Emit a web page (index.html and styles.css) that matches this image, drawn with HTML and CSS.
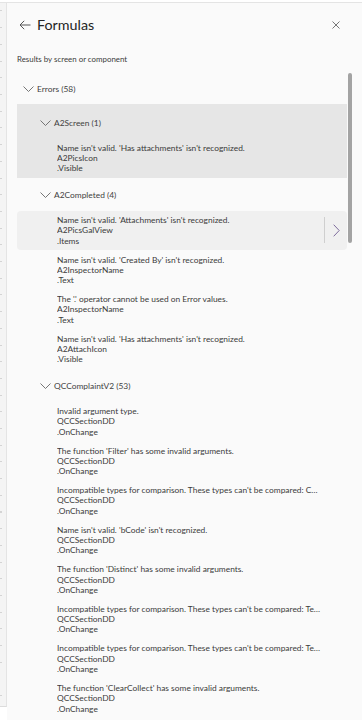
FILE: index.html
```html
<!DOCTYPE html>
<html lang="en">
<head>
<meta charset="utf-8">
<title>Formulas</title>
<link rel="stylesheet" href="styles.css">
</head>
<body>
<div class="app">
  <div class="rail"></div>
  <section class="panel">
    <header class="head">
      <svg class="back" width="12" height="10" viewBox="0 0 12 10" aria-hidden="true"><path d="M11.5 5H1M5.2 0.8L1 5l4.2 4.2" fill="none" stroke="#555" stroke-width="1"/></svg>
      <h1 class="title">Formulas</h1>
      <svg class="close" width="8" height="8" viewBox="0 0 8 8" aria-hidden="true"><path d="M0.5 0.5l7 7M7.5 0.5l-7 7" fill="none" stroke="#666" stroke-width="0.9"/></svg>
    </header>
    <p class="subtitle">Results by screen or component</p>

    <div class="results">
      <div class="cat-head">
        <svg class="chev" width="11" height="6" viewBox="0 0 11 6" aria-hidden="true"><path d="M0.5 0.5l5 5 5-5" fill="none" stroke="#666" stroke-width="0.9"/></svg>
        <span>Errors (58)</span>
      </div>

      <div class="group selected">
        <div class="group-head">
          <svg class="chev" width="11" height="6" viewBox="0 0 11 6" aria-hidden="true"><path d="M0.5 0.5l5 5 5-5" fill="none" stroke="#666" stroke-width="0.9"/></svg>
          <span>A2Screen (1)</span>
        </div>
        <div class="item">
          <div class="item-text">
            <div class="line">Name isn't valid. 'Has attachments' isn't recognized.</div>
            <div class="line">A2PicsIcon</div>
            <div class="line">.Visible</div>
          </div>
        </div>
      </div>

      <div class="group">
        <div class="group-head">
          <svg class="chev" width="11" height="6" viewBox="0 0 11 6" aria-hidden="true"><path d="M0.5 0.5l5 5 5-5" fill="none" stroke="#666" stroke-width="0.9"/></svg>
          <span>A2Completed (4)</span>
        </div>
        <div class="item hover">
          <div class="item-text">
            <div class="line">Name isn't valid. 'Attachments' isn't recognized.</div>
            <div class="line">A2PicsGalView</div>
            <div class="line">.Items</div>
          </div>
          <div class="go">
            <svg width="7" height="13" viewBox="0 0 7 13" aria-hidden="true"><path d="M0.7 0.7l5.5 5.8-5.5 5.8" fill="none" stroke="#7d6b9c" stroke-width="1"/></svg>
          </div>
        </div>
        <div class="item">
          <div class="item-text">
            <div class="line">Name isn't valid. 'Created By' isn't recognized.</div>
            <div class="line">A2InspectorName</div>
            <div class="line">.Text</div>
          </div>
        </div>
        <div class="item">
          <div class="item-text">
            <div class="line">The '.' operator cannot be used on Error values.</div>
            <div class="line">A2InspectorName</div>
            <div class="line">.Text</div>
          </div>
        </div>
        <div class="item">
          <div class="item-text">
            <div class="line">Name isn't valid. 'Has attachments' isn't recognized.</div>
            <div class="line">A2AttachIcon</div>
            <div class="line">.Visible</div>
          </div>
        </div>
      </div>

      <div class="group">
        <div class="group-head">
          <svg class="chev" width="11" height="6" viewBox="0 0 11 6" aria-hidden="true"><path d="M0.5 0.5l5 5 5-5" fill="none" stroke="#666" stroke-width="0.9"/></svg>
          <span>QCComplaintV2 (53)</span>
        </div>
        <div class="item">
          <div class="item-text">
            <div class="line">Invalid argument type.</div>
            <div class="line">QCCSectionDD</div>
            <div class="line">.OnChange</div>
          </div>
        </div>
        <div class="item">
          <div class="item-text">
            <div class="line">The function 'Filter' has some invalid arguments.</div>
            <div class="line">QCCSectionDD</div>
            <div class="line">.OnChange</div>
          </div>
        </div>
        <div class="item">
          <div class="item-text">
            <div class="line">Incompatible types for comparison. These types can't be compared: Control, Text.</div>
            <div class="line">QCCSectionDD</div>
            <div class="line">.OnChange</div>
          </div>
        </div>
        <div class="item">
          <div class="item-text">
            <div class="line">Name isn't valid. 'bCode' isn't recognized.</div>
            <div class="line">QCCSectionDD</div>
            <div class="line">.OnChange</div>
          </div>
        </div>
        <div class="item">
          <div class="item-text">
            <div class="line">The function 'Distinct' has some invalid arguments.</div>
            <div class="line">QCCSectionDD</div>
            <div class="line">.OnChange</div>
          </div>
        </div>
        <div class="item">
          <div class="item-text">
            <div class="line">Incompatible types for comparison. These types can't be compared: Text, Number.</div>
            <div class="line">QCCSectionDD</div>
            <div class="line">.OnChange</div>
          </div>
        </div>
        <div class="item">
          <div class="item-text">
            <div class="line">Incompatible types for comparison. These types can't be compared: Text, Record.</div>
            <div class="line">QCCSectionDD</div>
            <div class="line">.OnChange</div>
          </div>
        </div>
        <div class="item">
          <div class="item-text">
            <div class="line">The function 'ClearCollect' has some invalid arguments.</div>
            <div class="line">QCCSectionDD</div>
            <div class="line">.OnChange</div>
          </div>
        </div>
        <div class="item">
          <div class="item-text">
            <div class="line">The function 'Patch' has some invalid arguments.</div>
            <div class="line">QCCSectionDD</div>
            <div class="line">.OnChange</div>
          </div>
        </div>
      </div>
    </div>

    <div class="scrollbar"></div>
  </section>
</div>
</body>
</html>
```

FILE: styles.css
```css
* { box-sizing: border-box; }

html, body {
  margin: 0;
  padding: 0;
  height: 100%;
  background: #ffffff;
}

body {
  font-family: Lato, "Open Sans", "Liberation Sans", sans-serif;
  color: #3a3a3a;
  overflow: hidden;
}

.app {
  display: flex;
  height: 720px;
}

.rail {
  flex: 0 0 7px;
  margin-top: 2px;
  height: 705px;
  background-color: #f4f4f4;
  background-image: repeating-linear-gradient(to bottom, transparent 0 7.5px, #d4d4d4 7.5px 8.5px, transparent 8.5px 16.7px);
  background-size: 2px 100%;
  background-repeat: no-repeat;
  border-right: 1px solid #e4e4e4;
  border-top: 1px solid #e4e4e4;
  border-bottom: 1px solid #dcdcdc;
}

.panel {
  position: relative;
  flex: 1 1 auto;
  margin-top: 2px;
  border-top: 1px solid #e4e4e4;
  background: #fafafa;
  overflow: hidden;
}

.head {
  display: flex;
  align-items: center;
  height: 43px;
  padding: 0 22px 0 12px;
}

.back {
  display: block;
  margin-right: 6px;
}

.title {
  flex: 1 1 auto;
  margin: 0;
  font-size: 14.3px;
  font-weight: 400;
  color: #242424;
  line-height: 20px;
}

.close {
  display: block;
}

.subtitle {
  margin: 8px 0 0 10px;
  font-size: 7.9px;
  line-height: 10px;
  color: #3a3a3a;
}

.results {
  margin: 0 15px 0 10px;
}

.cat-head,
.group-head {
  display: flex;
  align-items: center;
  font-size: 8.4px;
  line-height: 10.3px;
  color: #3f3f3f;
}

.cat-head {
  padding: 19.85px 0 10.35px 6px;
}

.group-head {
  padding: 12px 0 10.35px 23px;
}

.chev {
  display: block;
  margin-right: 3px;
}

.group.selected {
  background: #e6e6e6;
}

.group.selected .group-head {
  padding-top: 13.35px;
}

.item {
  display: flex;
  align-items: center;
  padding: 4.35px 0;
  border-radius: 4px;
}

.item.hover {
  background: #f0f0f0;
}

.item-text {
  flex: 1 1 auto;
  min-width: 0;
  padding: 0 26px 0 40px;
  font-size: 8.4px;
  line-height: 10.3px;
}

.item.hover .item-text {
  padding-right: 3px;
}

.line {
  white-space: nowrap;
  overflow: hidden;
  text-overflow: ellipsis;
}

.go {
  flex: 0 0 23px;
  display: flex;
  align-items: center;
  justify-content: center;
  height: 26px;
  border-left: 1px solid #cfcfcf;
}

.scrollbar {
  position: absolute;
  top: 70px;
  right: 10px;
  width: 4px;
  height: 170px;
  border-radius: 2px;
  background: #a3a3a3;
}
```
